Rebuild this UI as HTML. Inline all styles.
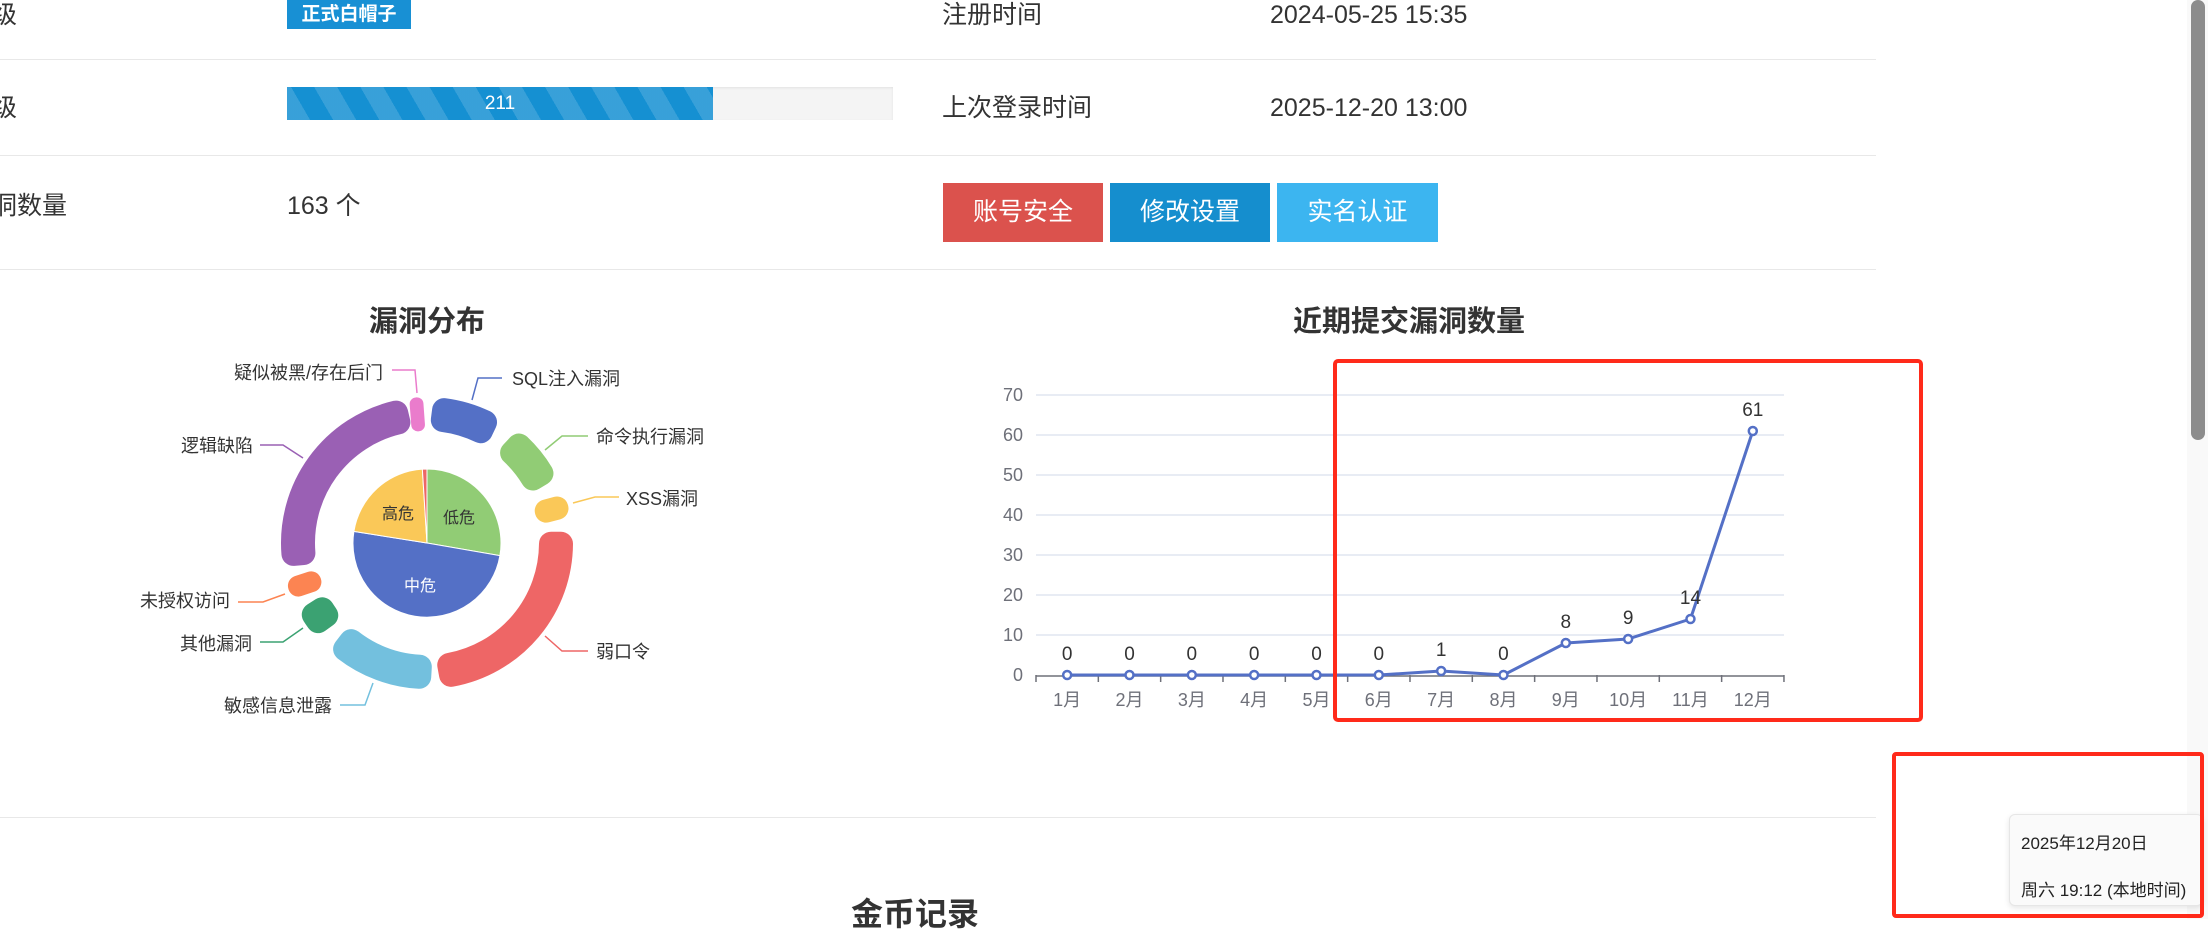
<!DOCTYPE html>
<html><head><meta charset="utf-8">
<style>
*{margin:0;padding:0;box-sizing:border-box}
html,body{width:2208px;height:919px;overflow:hidden;background:#fff;font-family:"Liberation Sans","Noto Sans CJK SC",sans-serif;color:#333}
.a{position:absolute;white-space:nowrap}
.t{font-size:25px;line-height:30px;color:#333}
.hl{position:absolute;left:0;width:1876px;height:1px;background:#e8e8e8}
.btn{position:absolute;top:183px;height:59px;color:#fff;font-size:25px;line-height:59px;text-align:center}
</style></head><body>
<div class="a t" style="left:-33px;top:0px">等级</div>
<div class="a t" style="left:-33px;top:93px">等级</div>
<div class="a t" style="left:-33px;top:191px">漏洞数量</div>
<div class="hl" style="top:59px"></div>
<div class="hl" style="top:155px"></div>
<div class="hl" style="top:269px"></div>
<div class="hl" style="top:817px"></div>

<div class="a" style="left:287px;top:0;width:124px;height:29px;background:#1890d4;color:#fff;font-weight:bold;font-size:19px;line-height:29px;text-align:center">正式白帽子</div>
<div class="a" style="left:287px;top:87px;width:606px;height:33px;background:#f4f4f4;box-shadow:inset 0 1px 2px rgba(0,0,0,.08)">
 <div style="position:absolute;left:0;top:0;width:426px;height:33px;background-color:#1590d2;background-image:repeating-linear-gradient(60deg,rgba(255,255,255,.15) 0 20px,transparent 20px 40px);color:#fff;font-size:19px;line-height:33px;text-align:center">211</div>
</div>
<div class="a t" style="left:287px;top:191px">163 个</div>

<div class="a t" style="left:942px;top:0px">注册时间</div>
<div class="a t" style="left:1270px;top:0px">2024-05-25 15:35</div>
<div class="a t" style="left:942px;top:93px">上次登录时间</div>
<div class="a t" style="left:1270px;top:93px">2025-12-20 13:00</div>
<div class="btn" style="left:943px;width:160px;background:#db524d">账号安全</div>
<div class="btn" style="left:1110px;width:160px;background:#158ece">修改设置</div>
<div class="btn" style="left:1277px;width:161px;background:#3cb5f0">实名认证</div>

<div class="a" style="left:915px;top:889px;transform:translateX(-50%);font-size:32px;font-weight:bold;color:#333">金币记录</div>

<svg id="s" class="a" style="left:0;top:0" width="2208" height="919" xmlns="http://www.w3.org/2000/svg" font-family="Liberation Sans, Noto Sans CJK SC, sans-serif">
<text x="427" y="331" text-anchor="middle" font-size="29" font-weight="bold" fill="#333">漏洞分布</text>
<text x="1409" y="331" text-anchor="middle" font-size="29" font-weight="bold" fill="#333">近期提交漏洞数量</text>
<g id="donut"></g>
<g fill="none" stroke-width="1.5">
<polyline points="392,370 415,370 417,393" stroke="#ea7ccc"/>
<polyline points="502,378 478,378 472,400" stroke="#5470c6"/>
<polyline points="588,436 562,436 545,450" stroke="#91cc75"/>
<polyline points="619,497 595,497 573,503" stroke="#fac858"/>
<polyline points="588,651 562,651 545,636" stroke="#ee6666"/>
<polyline points="340,705 365,705 373,683" stroke="#73c0de"/>
<polyline points="260,642 283,642 303,628" stroke="#3ba272"/>
<polyline points="238,602 263,602 285,594" stroke="#fc8452"/>
<polyline points="260,445 283,445 303,458" stroke="#9a60b4"/>
</g>
<g font-size="18" fill="#333">
<text x="383" y="379" text-anchor="end">疑似被黑/存在后门</text>
<text x="512" y="385">SQL注入漏洞</text>
<text x="596" y="443">命令执行漏洞</text>
<text x="626" y="505">XSS漏洞</text>
<text x="596" y="658">弱口令</text>
<text x="332" y="712" text-anchor="end">敏感信息泄露</text>
<text x="252" y="650" text-anchor="end">其他漏洞</text>
<text x="230" y="607" text-anchor="end">未授权访问</text>
<text x="253" y="452" text-anchor="end">逻辑缺陷</text>
</g>
<g font-size="16">
<text x="398" y="519" text-anchor="middle" fill="#333">高危</text>
<text x="459" y="523" text-anchor="middle" fill="#333">低危</text>
<text x="420" y="591" text-anchor="middle" fill="#fff">中危</text>
</g>
<g id="line"></g>
<rect x="1335" y="361" width="586" height="359" rx="3" fill="none" stroke="#ff2a1a" stroke-width="4"/>
</svg>

<div class="a" style="left:2187px;top:0;width:21px;height:919px;background:#f9f9f9"></div>
<div class="a" style="left:2191px;top:0;width:14px;height:440px;background:#8c8c8c;border-radius:7px"></div>
<div class="a" style="left:2009px;top:814px;width:194px;height:92px;background:#fafafa;border:1px solid #e6e6e6;border-radius:6px;box-shadow:0 2px 6px rgba(0,0,0,.1);font-size:17px;color:#222">
 <div style="position:absolute;left:11px;top:14px">2025年12月20日</div>
 <div style="position:absolute;left:11px;top:61px">周六 19:12 (本地时间)</div>
</div>
<svg class="a" style="left:0;top:0" width="2208" height="919"><rect x="1894" y="754" width="308" height="162" rx="2" fill="none" stroke="#ff2a1a" stroke-width="4"/></svg>

<script>
var NS="http://www.w3.org/2000/svg";
function el(p,t,a){var e=document.createElementNS(NS,t);for(var k in a)e.setAttribute(k,a[k]);p.appendChild(e);return e;}
var cx=427,cy=543,d=document.getElementById('donut');
function pt(r,a){a=a*Math.PI/180;return (cx+r*Math.sin(a)).toFixed(2)+','+(cy-r*Math.cos(a)).toFixed(2);}
var pie=[[0,99.8,'#91cc75'],[99.8,279,'#5470c6'],[279,356.4,'#fac858'],[356.4,360,'#ee6666']];
pie.forEach(function(s){var r=74,l=(s[1]-s[0])>180?1:0;
 el(d,'path',{d:'M'+cx+','+cy+' L'+pt(r,s[0])+' A'+r+','+r+' 0 '+l+' 1 '+pt(r,s[1])+' Z',fill:s[2],stroke:'#fff','stroke-width':1});});
var ring=[[-7.2,-1.4,'#ea7ccc'],[2,31,'#5470c6'],[38,64,'#91cc75'],[70,80,'#fac858'],[85,175,'#ee6666'],[178,223,'#73c0de'],[229,243,'#3ba272'],[247,256,'#fc8452'],[260,352,'#9a60b4']];
ring.forEach(function(s){var sw=24,h=sw/2,r1=112+h,r2=146-h,rm=129;
 var da=h/rm*180/Math.PI,a0=s[0]+da,a1=s[1]-da;
 if(a1-a0<0.3){var m=(s[0]+s[1])/2;sw=Math.max(8,Math.min(24,(s[1]-s[0])*Math.PI/180*rm));h=sw/2;r1=112+h;r2=146-h;var dd=Math.max(0.15,((s[1]-s[0])/2)-h/rm*180/Math.PI);a0=m-dd;a1=m+dd;}
 var l=(a1-a0)>180?1:0;
 el(d,'path',{d:'M'+pt(r2,a0)+' A'+r2+','+r2+' 0 '+l+' 1 '+pt(r2,a1)+' L'+pt(r1,a1)+' A'+r1+','+r1+' 0 '+l+' 0 '+pt(r1,a0)+' Z',fill:s[2],stroke:s[2],'stroke-width':sw,'stroke-linejoin':'round'});});
var g=document.getElementById('line'),x0=1036,x1=1784,y0=675,st=62.33;
for(var v=10;v<=70;v+=10)el(g,'line',{x1:x0,x2:x1,y1:y0-v*4,y2:y0-v*4,stroke:'#e0e6f1','stroke-width':1.5});
for(var v=0;v<=70;v+=10){var t=el(g,'text',{x:1023,y:y0-v*4+6,'text-anchor':'end','font-size':18,fill:'#6e7079'});t.textContent=v;}
el(g,'line',{x1:x0,x2:x1,y1:y0+1,y2:y0+1,stroke:'#6e7079','stroke-width':1.5});
for(var i=0;i<=12;i++){var x=x0+i*st;el(g,'line',{x1:x,x2:x,y1:y0,y2:y0+7,stroke:'#6e7079','stroke-width':1.5});}
var vals=[0,0,0,0,0,0,1,0,8,9,14,61],pts=[];
vals.forEach(function(v,i){var x=x0+st/2+i*st,y=y0-v*4;pts.push(x+','+y);
 var t=el(g,'text',{x:x,y:706,'text-anchor':'middle','font-size':18,fill:'#6e7079'});t.textContent=(i+1)+'月';});
el(g,'polyline',{points:pts.join(' '),fill:'none',stroke:'#5470c6','stroke-width':3,'stroke-linejoin':'round'});
vals.forEach(function(v,i){var x=x0+st/2+i*st,y=y0-v*4;
 el(g,'circle',{cx:x,cy:y,r:4,fill:'#fff',stroke:'#5470c6','stroke-width':2.5});
 var t=el(g,'text',{x:x,y:y-15,'text-anchor':'middle','font-size':19,fill:'#333'});t.textContent=v;});
</script>
</body></html>
